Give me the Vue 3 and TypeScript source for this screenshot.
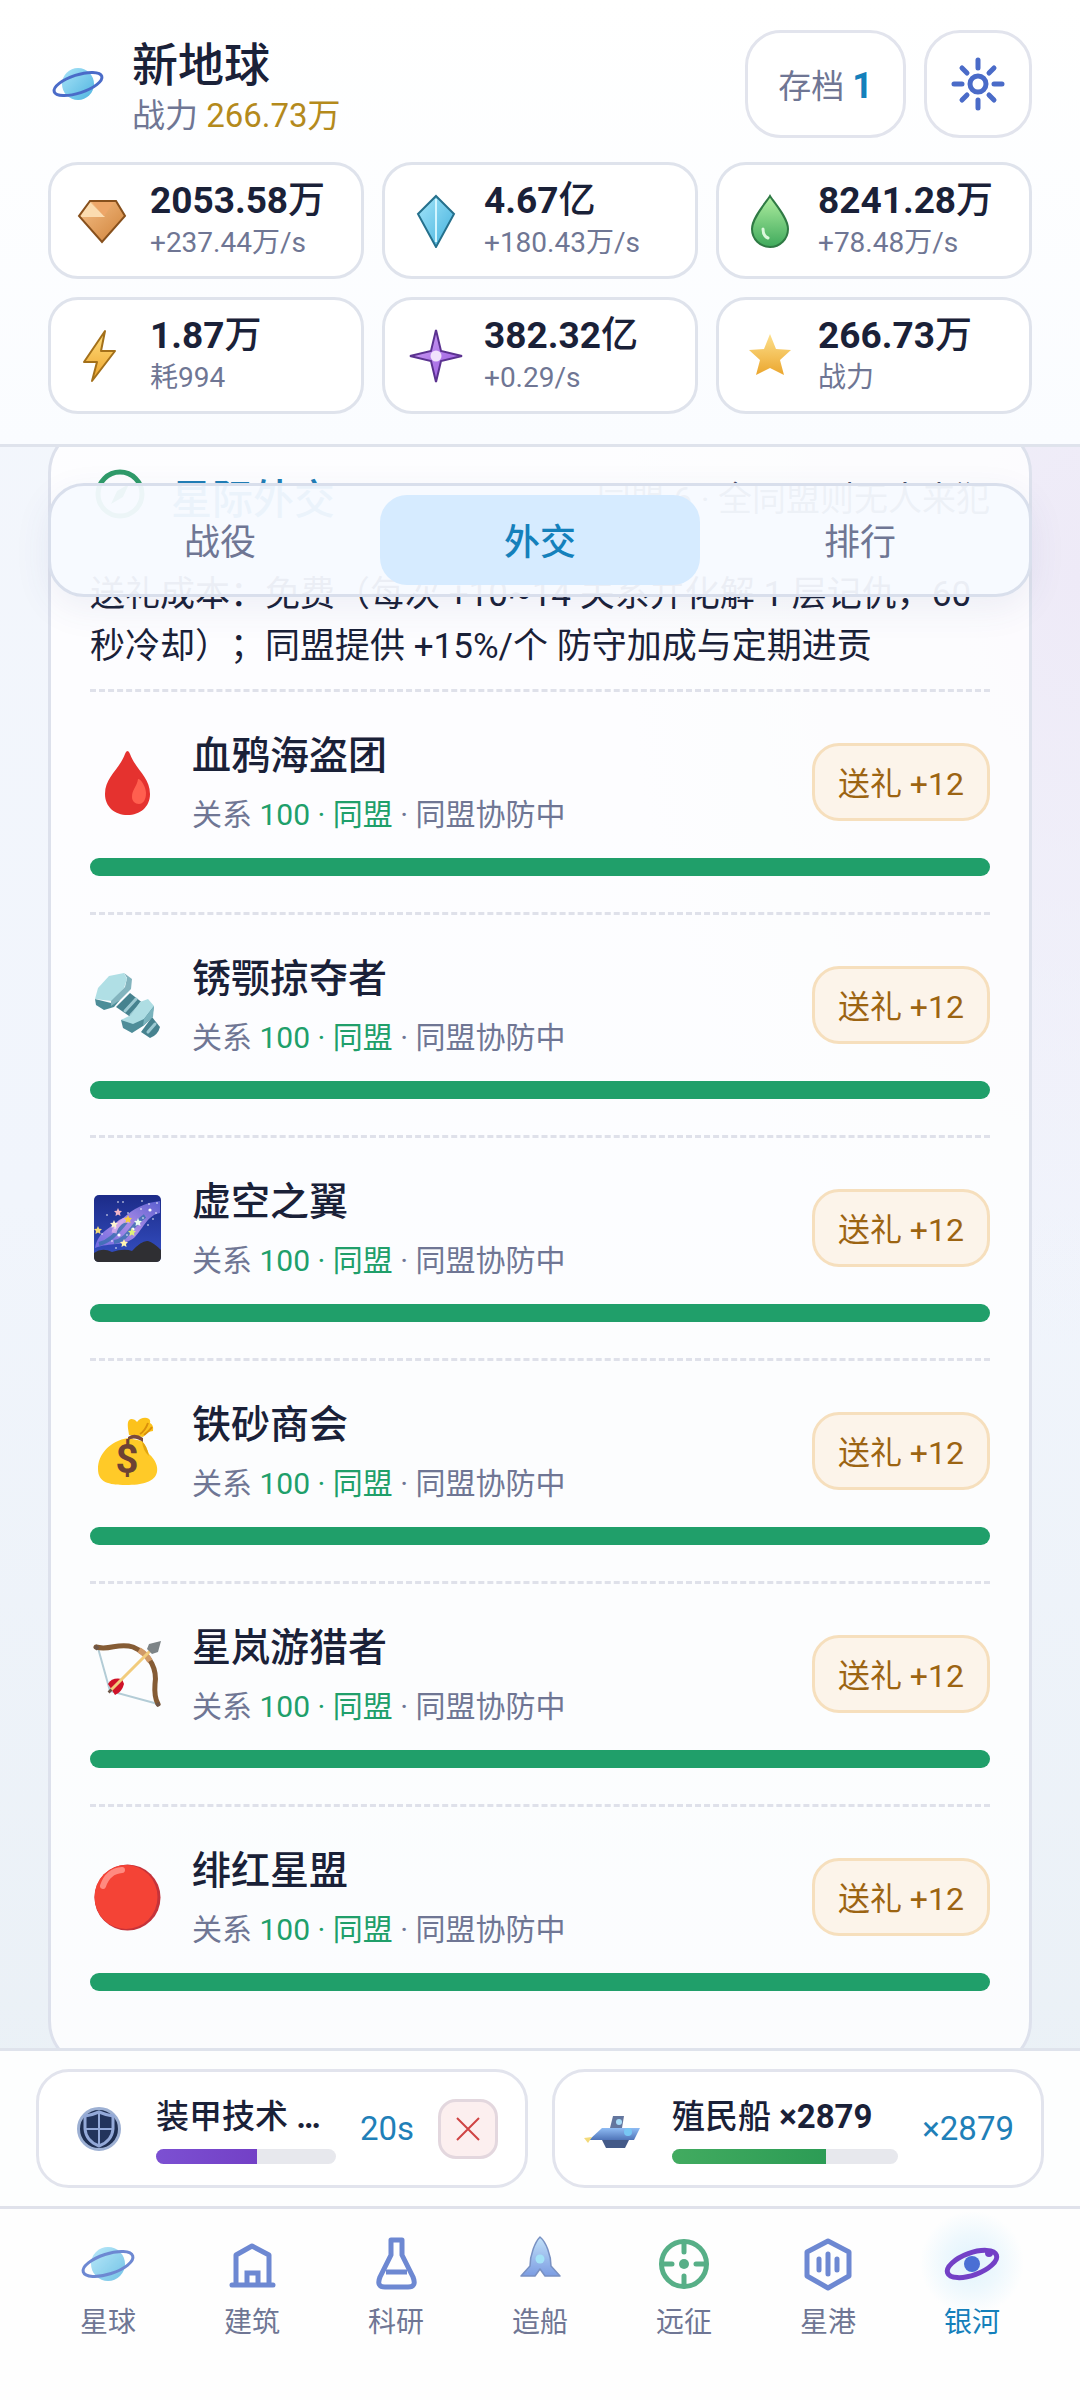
<script setup lang="ts">
import { ref } from 'vue'

interface Resource {
  id: string
  value: string
  unit: string
  rate: string
}

interface Faction {
  id: string
  name: string
  relation: number
}

interface QueueItem {
  id: string
  name: string
  count: string
  status: string
  percent: number
  cancelable: boolean
}

const resources: Resource[] = [
  { id: 'ore', value: '2053.58', unit: '万', rate: '+237.44万/s' },
  { id: 'crystal', value: '4.67', unit: '亿', rate: '+180.43万/s' },
  { id: 'gas', value: '8241.28', unit: '万', rate: '+78.48万/s' },
  { id: 'energy', value: '1.87', unit: '万', rate: '耗994' },
  { id: 'dark', value: '382.32', unit: '亿', rate: '+0.29/s' },
  { id: 'power', value: '266.73', unit: '万', rate: '战力' },
]

const tabs = ['战役', '外交', '排行']
const activeTab = ref('外交')

const factions: Faction[] = [
  { id: 'blood', name: '血鸦海盗团', relation: 100 },
  { id: 'bolt', name: '锈颚掠夺者', relation: 100 },
  { id: 'void', name: '虚空之翼', relation: 100 },
  { id: 'money', name: '铁砂商会', relation: 100 },
  { id: 'bow', name: '星岚游猎者', relation: 100 },
  { id: 'crimson', name: '绯红星盟', relation: 100 },
]

const queue: QueueItem[] = [
  { id: 'armor', name: '装甲技术', count: '…', status: '20s', percent: 56, cancelable: true },
  { id: 'colony', name: '殖民船', count: '×2879', status: '×2879', percent: 68, cancelable: false },
]

const navItems = [
  { id: 'planet', label: '星球' },
  { id: 'build', label: '建筑' },
  { id: 'research', label: '科研' },
  { id: 'ship', label: '造船' },
  { id: 'expedition', label: '远征' },
  { id: 'port', label: '星港' },
  { id: 'galaxy', label: '银河' },
]
const activeNav = ref('galaxy')

const skyDots: [number, number, number][] = [
  [28, 11, 1], [33, 11, 1], [52, 10, 1], [59, 13, 1], [60, 19, 2], [51, 18, 1], [17, 24, 1],
  [63, 28, 1], [58, 34, 1], [48, 32, 2], [43, 38, 2], [29, 44, 2], [25, 37, 1], [12, 43, 1],
  [22, 50, 1], [37, 44, 1], [67, 12, 1], [26, 57, 1], [53, 27, 1], [38, 22, 1], [66, 22, 1],
]
const skyStars: [number, number, string][] = [
  [28, 21, '#f3b6c8'], [38, 28, '#f8cf3c'], [8, 39, '#f5dc78'], [42, 41, '#dff07a'],
  [34, 52, '#fff3b0'], [24, 33, '#fdf2d0'], [48, 31, '#eafcf0'],
]
</script>

<template>
  <div class="app">
    <svg class="defs" width="0" height="0" aria-hidden="true">
      <defs>
        <linearGradient id="g-planet" x1="0" y1="0" x2="1" y2="1">
          <stop offset="0" stop-color="#a9e4f8" /><stop offset="1" stop-color="#4fb4e0" />
        </linearGradient>
        <linearGradient id="g-ore" x1="0" y1="0" x2="1" y2="1">
          <stop offset="0" stop-color="#f5c088" /><stop offset="1" stop-color="#cf8138" />
        </linearGradient>
        <linearGradient id="g-crystal" x1="0" y1="0" x2="1" y2="1">
          <stop offset="0" stop-color="#a4e6fa" /><stop offset="1" stop-color="#43b0dc" />
        </linearGradient>
        <linearGradient id="g-gas" x1="0" y1="0" x2="0" y2="1">
          <stop offset="0" stop-color="#b0eea0" /><stop offset="1" stop-color="#3faa5c" />
        </linearGradient>
        <linearGradient id="g-energy" x1="0" y1="0" x2="0" y2="1">
          <stop offset="0" stop-color="#ffdf80" /><stop offset="1" stop-color="#eda32a" />
        </linearGradient>
        <linearGradient id="g-dark" x1="0" y1="0" x2="1" y2="1">
          <stop offset="0" stop-color="#d3a9f7" /><stop offset="1" stop-color="#9350dc" />
        </linearGradient>
        <linearGradient id="g-star" x1="0" y1="0" x2="0" y2="1">
          <stop offset="0" stop-color="#fde08c" /><stop offset="1" stop-color="#eba62e" />
        </linearGradient>
        <linearGradient id="g-hull" x1="0" y1="0" x2="0" y2="1">
          <stop offset="0" stop-color="#8fbcf4" /><stop offset="1" stop-color="#4f74b8" />
        </linearGradient>
        <linearGradient id="g-rocket" x1="0" y1="0" x2="0" y2="1">
          <stop offset="0" stop-color="#b4dbf8" /><stop offset="1" stop-color="#5c85dc" />
        </linearGradient>
        <linearGradient id="g-sky" x1="0" y1="0" x2="0" y2="1">
          <stop offset="0" stop-color="#1c2b88" /><stop offset="1" stop-color="#3550c4" />
        </linearGradient>
        <linearGradient id="g-milky" x1="0" y1="1" x2="1" y2="0">
          <stop offset="0" stop-color="#6f6ae0" /><stop offset="0.5" stop-color="#a98be6" /><stop offset="1" stop-color="#5a5fd0" />
        </linearGradient>
      </defs>
    </svg>

    <header class="top">
      <div class="brand-row">
        <svg class="brand-icon" viewBox="0 0 60 60" aria-hidden="true">
          <circle cx="30" cy="30" r="16" fill="url(#g-planet)" />
          <ellipse cx="30" cy="30" rx="25" ry="9" transform="rotate(-18 30 30)" fill="none" stroke="#4a6bc8" stroke-width="3" />
        </svg>
        <div class="brand">
          <h1>新地球</h1>
          <p>战力 <span class="gold">266.73万</span></p>
        </div>
        <button class="save" type="button">存档 <b>1</b></button>
        <button class="settings" type="button" aria-label="设置">
          <svg viewBox="0 0 60 60" fill="none" stroke="#4a6bc8" stroke-width="5" stroke-linecap="round">
            <circle cx="30" cy="30" r="8" />
            <path d="M30 14V6M30 46v8M14 30H6M46 30h8M19 19l-5-5M41 19l5-5M19 41l-5 5M41 41l5 5" />
          </svg>
        </button>
      </div>

      <div class="resources">
        <div v-for="r in resources" :key="r.id" class="resource">
          <svg class="res-icon" viewBox="0 0 54 54" aria-hidden="true">
            <g v-if="r.id === 'ore'">
              <path d="M15 7H41L50 22L27 48L4 22Z" fill="url(#g-ore)" />
              <path d="M15 8L5 23H30Z" fill="#fbdcb0" />
              <path d="M17 8H39L29 22Z" fill="#eda668" />
              <path d="M15 7H41L50 22L27 48L4 22Z" fill="none" stroke="#87501c" stroke-width="2" />
            </g>
            <g v-else-if="r.id === 'crystal'">
              <path d="M27 2L45 20L27 53L9 20Z" fill="url(#g-crystal)" stroke="#25708c" stroke-width="2" />
              <path d="M27 5V48" stroke="#d2f5ff" stroke-width="2" />
            </g>
            <g v-else-if="r.id === 'gas'">
              <path d="M27 2C22 10 9 24 9 35A18 18 0 0 0 45 35C45 24 32 10 27 2Z" fill="url(#g-gas)" stroke="#2f7a44" stroke-width="2" />
              <path d="M20 35Q20 42 25 44" fill="none" stroke="#dcf8dd" stroke-width="3" stroke-linecap="round" />
            </g>
            <path v-else-if="r.id === 'energy'" d="M30 2L26 22H40L17 52L22 33H9Z" fill="url(#g-energy)" stroke="#a3701a" stroke-width="2" stroke-linejoin="round" />
            <g v-else-if="r.id === 'dark'">
              <path d="M27 1L32 22L53 27L32 32L27 53L22 32L1 27L22 22Z" fill="url(#g-dark)" stroke="#5b3290" stroke-width="2" />
              <circle cx="27" cy="27" r="5.5" fill="#f0e2fc" />
            </g>
            <path v-else d="M27 5L33 20L48 21L37 31L41 46L27 39L13 46L17 31L6 21L21 20Z" fill="url(#g-star)" />
          </svg>
          <div class="res-text">
            <strong>{{ r.value }}<span>{{ r.unit }}</span></strong>
            <small>{{ r.rate }}</small>
          </div>
        </div>
      </div>
    </header>

    <div class="stage">
      <nav class="tabs" aria-label="银河分区">
        <button
          v-for="t in tabs"
          :key="t"
          type="button"
          :class="{ active: t === activeTab }"
          @click="activeTab = t"
        >{{ t }}</button>
      </nav>

      <main class="scroll">
        <section class="panel">
          <div class="panel-head">
            <svg class="compass" viewBox="0 0 60 60" aria-hidden="true">
              <circle cx="30" cy="28" r="22" fill="none" stroke="#2f9b69" stroke-width="5" />
              <path d="M39 18L33 31L21 38L27 25Z" fill="#2f9b69" />
            </svg>
            <h2>星际外交</h2>
            <span class="hint">同盟 6 · 全同盟则无人来犯</span>
          </div>
          <p class="note">送礼成本：免费（每次 +10~14 关系并化解 1 层记仇，60 秒冷却）；同盟提供 +15%/个 防守加成与定期进贡</p>

          <article v-for="f in factions" :key="f.id" class="faction">
            <div class="faction-row">
              <svg class="emblem" viewBox="0 0 75 75" aria-hidden="true">
                <g v-if="f.id === 'blood'">
                  <path d="M37.5 6Q39 6 40 9C46 25 60 32 60 49C60 62 50 70 37.5 70S15 62 15 49C15 32 29 25 35 9Q36 6 37.5 6Z" fill="#e5322f" />
                  <path d="M48 34C51 34 56 42 56 48C56 55 53 59 49 59S42 56 42 52C42 44 47 42 48 34Z" fill="#ff5f4f" />
                </g>
                <g v-else-if="f.id === 'bolt'">
                  <path d="M26 39L40 25L54 36L42 50Z" fill="#46828f" />
                  <path d="M35 43L46 31M41 47L51 36" stroke="#9cc9d2" stroke-width="3" stroke-linecap="round" />
                  <path d="M51 64L62 49L70 59Q68 67 60 70Z" fill="#46828f" />
                  <path d="M58 64L65 56" stroke="#9cc9d2" stroke-width="3" stroke-linecap="round" />
                  <path d="M31 52L43 49L50 48L64 38L62 50L53 58L42 65L33 60Z" fill="#4f8d99" />
                  <path d="M31 52L41 47L50 34L58 31L64 38L54 51L43 56Z" fill="#aedde3" />
                  <path d="M64 38L54 51L53 58L63 49Z" fill="#7ab3bd" />
                  <path d="M5 31L21 35L30 32L24 39L14 42L6 37Z" fill="#4d8d98" />
                  <path d="M34 5L42 11L41 21L30 32L21 38V32L35 19L37 10Z" fill="#83b4be" />
                  <path d="M5 31L8 20L19 8L34 5L37 11L34 20L21 33Z" fill="#b0dfe5" />
                </g>
                <g v-else-if="f.id === 'void'">
                  <rect x="4" y="4" width="67" height="67" rx="5" fill="url(#g-sky)" />
                  <path d="M5 57C8 40 22 36 32 28C44 17 54 12 70 10V22C58 24 54 36 45 46C34 56 20 51 5 57Z" fill="url(#g-milky)" />
                  <path d="M9 53C21 50 28 40 36 31M24 51C37 50 40 35 55 25" fill="none" stroke="#2d6fa8" stroke-width="4" opacity="0.7" />
                  <path d="M24 42C26 32 34 27 40 30" fill="none" stroke="#dfb0ee" stroke-width="5" opacity="0.8" />
                  <circle v-for="(d, i) in skyDots" :key="'d' + i" :cx="d[0]" :cy="d[1]" :r="d[2] * 0.8" fill="#fff" />
                  <path
                    v-for="(s, i) in skyStars"
                    :key="'s' + i"
                    d="M0-4L1.2-1.3L4-1L2 1L2.5 4L0 2.5L-2.5 4L-2 1L-4-1L-1.2-1.3Z"
                    :transform="`translate(${s[0]} ${s[1]})`"
                    :fill="s[2]"
                  />
                  <path d="M4 62Q12 56 22 61Q34 57 42 60Q52 49 58 50Q64 52 71 59V66Q71 71 66 71H9Q4 71 4 66Z" fill="#2f2f33" />
                </g>
                <g v-else-if="f.id === 'money'">
                  <path d="M39 21C38 14 36 6 41 5Q45 5 47 8Q51 3 57 4Q61 5 60 9Q64 11 63 17Q58 17 53 23Z" fill="#fcc21b" />
                  <path d="M50 20Q55 17 58 9M54 21Q60 16 62 13" fill="none" stroke="#d98f0c" stroke-width="2" />
                  <path d="M38 24L52 27Q57 33 59 40C66 46 68 53 67 58C65 68 52 71 36 71C18 71 8 68 8 55C8 40 20 27 38 24Z" fill="#ffca28" />
                  <path d="M52 27Q57 32 59 42Q53 37 52 27Z" fill="#e2a610" />
                  <path d="M38 23Q45 18 53 24V28Q45 22 38 26Z" fill="#7a4a3c" />
                  <text x="37" y="59" text-anchor="middle" class="coin">$</text>
                </g>
                <g v-else-if="f.id === 'bow'" fill="none">
                  <path d="M8 11L20 54L68 67" stroke="#b3ccd6" stroke-width="2" />
                  <path d="M6 10C20 14 28 5 43 10C62 18 67 34 65 47Q64 60 68 67" stroke="#855c35" stroke-width="5" stroke-linecap="round" />
                  <path d="M49 13Q56 17 60 24" stroke="#d09a68" stroke-width="6" />
                  <path d="M18 47Q22 40 32 42L34 47Q32 55 25 58Z" fill="#cf1228" />
                  <path d="M21 53L60 14" stroke="#f2cc7c" stroke-width="3" />
                  <path d="M71 4L68 15L62 17L57 12L59 7Z" fill="#7d8487" />
                  <path d="M5 9L8 12M67 66L69 69M19 53L21 55" stroke="#6d5648" stroke-width="4" />
                </g>
                <g v-else>
                  <circle cx="37.5" cy="37.5" r="33" fill="#c5333a" />
                  <ellipse cx="36" cy="37" rx="31.5" ry="32" fill="#f44336" />
                  <path d="M13 26Q18 11 32 10" fill="none" stroke="#ff8a80" stroke-width="6" stroke-linecap="round" />
                </g>
              </svg>
              <div class="faction-text">
                <h3>{{ f.name }}</h3>
                <p>关系 <b>{{ f.relation }} · 同盟</b> · 同盟协防中</p>
              </div>
              <button class="gift" type="button">送礼 +12</button>
            </div>
            <div class="relation" role="progressbar" :aria-valuenow="f.relation" aria-label="关系">
              <div :style="{ width: f.relation + '%' }"></div>
            </div>
          </article>
        </section>
      </main>
    </div>

    <section class="queue">
      <div v-for="q in queue" :key="q.id" class="job">
        <svg class="job-icon" viewBox="0 0 66 66" aria-hidden="true">
          <g v-if="q.id === 'armor'">
            <circle cx="33" cy="33" r="20.5" fill="#1f2f52" stroke="#9db0d3" stroke-width="3" />
            <path d="M33 16Q40 19 47 20V33Q46 45 33 50Q20 45 19 33V20Q26 19 33 16Z" fill="#22345c" stroke="#93a9d8" stroke-width="3" />
            <path d="M33 17V50M19 33H47" stroke="#93a9d8" stroke-width="2" />
          </g>
          <g v-else>
            <path d="M31 20H42L40 32H28Z" fill="#63769e" />
            <path d="M20 44H47L43 52H24Z" fill="#445a88" />
            <path d="M7 44L20 32H58L52 44Z" fill="url(#g-hull)" />
            <circle cx="37" cy="26" r="3" fill="#a4dbf8" />
            <circle cx="46" cy="36" r="4" fill="#78c7f4" />
            <path d="M2 42L10 41L6 47Z" fill="#f3da7a" />
          </g>
        </svg>
        <div class="job-body">
          <div class="job-name">{{ q.name }} <b>{{ q.count }}</b></div>
          <div class="track" role="progressbar" :aria-valuenow="q.percent" :aria-label="q.name">
            <div :class="q.id" :style="{ width: q.percent + '%' }"></div>
          </div>
        </div>
        <span class="job-status">{{ q.status }}</span>
        <button v-if="q.cancelable" class="cancel" type="button" aria-label="取消">
          <svg viewBox="0 0 24 24"><path d="M1 1L23 23M23 1L1 23" stroke="#cf4444" stroke-width="2" /></svg>
        </button>
      </div>
    </section>

    <nav class="bottom" aria-label="主导航">
      <button
        v-for="n in navItems"
        :key="n.id"
        type="button"
        :class="{ active: n.id === activeNav }"
        @click="activeNav = n.id"
      >
        <svg viewBox="0 0 60 60" fill="none" stroke="#4a6bc8" stroke-width="5" stroke-linejoin="round" stroke-linecap="round" aria-hidden="true">
          <g v-if="n.id === 'planet'">
            <circle cx="30" cy="31" r="17" fill="url(#g-planet)" stroke="none" />
            <ellipse cx="30" cy="31" rx="26" ry="10" transform="rotate(-18 30 31)" stroke-width="3" />
          </g>
          <g v-else-if="n.id === 'build'">
            <path d="M14 51V22L30 13L47 22V51M10 52H51" />
            <path d="M25 51V40H36V51" stroke-linejoin="miter" />
          </g>
          <g v-else-if="n.id === 'research'">
            <path d="M25 7H36V22L47 44Q51 54 42 54H19Q10 54 14 44L25 22Z" />
            <path d="M20 39H41" stroke-linecap="butt" />
          </g>
          <g v-else-if="n.id === 'ship'" stroke="none">
            <path d="M30 4C25 9 20 22 20 33L11 43H25L30 36L35 43H50L41 33C41 22 36 9 30 4Z" fill="url(#g-rocket)" stroke="#5876b4" stroke-width="1.5" />
            <circle cx="30" cy="26" r="4.5" fill="#8ddcf6" />
          </g>
          <g v-else-if="n.id === 'expedition'" stroke="#2e9c6a">
            <circle cx="30" cy="31" r="22.5" />
            <path d="M30 9V19M30 43V53M8 31H18M42 31H52" />
            <circle cx="30" cy="31" r="5" fill="#2e9c6a" stroke="none" />
          </g>
          <g v-else-if="n.id === 'port'">
            <path d="M30 8L51 19V43L30 55L9 43V19Z" />
            <path d="M30 21V41M21 26V37M39 26V37" />
          </g>
          <g v-else>
            <ellipse cx="30" cy="31" rx="26" ry="11" transform="rotate(-20 30 31)" stroke="#7340c6" stroke-width="5" />
            <circle cx="30" cy="31" r="8" fill="#4a6fd4" stroke="none" />
            <circle cx="47" cy="20" r="4" fill="#7340c6" stroke="none" />
          </g>
        </svg>
        <span>{{ n.label }}</span>
      </button>
    </nav>
  </div>
</template>

<style>
body {
  margin: 0;
}
</style>

<style scoped>
* {
  box-sizing: border-box;
}

.app {
  display: flex;
  flex-direction: column;
  height: 100vh;
  font-family: Roboto, "Noto Sans CJK SC", sans-serif;
  color: #1a2138;
  background:
    radial-gradient(ellipse at 100% 24%, #eeeaf7 0, transparent 30%),
    linear-gradient(#f4f7fc, #f1f5fc 50%, #e8eff4);
}

.defs {
  position: absolute;
}

h1, h2, h3, p {
  margin: 0;
  font-weight: 400;
}

button {
  margin: 0;
  padding: 0;
  border: 0;
  background: none;
  font-family: inherit;
  color: inherit;
}

svg {
  display: block;
  flex: none;
}

/* Header */
.top {
  padding: 30px 48px;
  border-bottom: 3px solid #dfe3ec;
  background: linear-gradient(#ffffff, #fafcff);
}

.brand-row {
  display: flex;
  align-items: center;
  gap: 18px;
  margin-bottom: 24px;
}

.brand-icon {
  width: 60px;
  height: 60px;
}

.brand {
  flex: 1;
  padding: 3px 0 0 6px;
}

.brand h1 {
  font-size: 46px;
  line-height: 60px;
  font-weight: 500;
}

.brand p {
  font-size: 33px;
  line-height: 42px;
  color: #6f7694;
}

.gold {
  color: #b48a1c;
}

.save,
.settings {
  height: 108px;
  border: 3px solid #e2e4ed;
  border-radius: 36px;
  background: #fff;
}

.save {
  padding: 0 30px;
  font-size: 33px;
  color: #6f7694;
}

.save b {
  font-size: 36px;
  color: #1480bb;
}

.settings {
  display: grid;
  place-items: center;
  width: 108px;
}

.settings svg {
  width: 60px;
  height: 60px;
}

.resources {
  display: grid;
  grid-template-columns: repeat(3, 1fr);
  gap: 18px;
}

.resource {
  display: flex;
  align-items: center;
  gap: 21px;
  height: 117px;
  padding: 0 24px;
  border: 3px solid #dfe3ec;
  border-radius: 30px;
  background: #fff;
}

.res-icon {
  width: 54px;
  height: 54px;
}

.res-text {
  padding-bottom: 3px;
  white-space: nowrap;
}

.res-text strong {
  display: block;
  font-size: 37px;
  line-height: 48px;
  font-weight: 700;
}

.res-text strong span {
  font-weight: 500;
}

.res-text small {
  display: block;
  font-size: 28px;
  line-height: 36px;
  color: #6f7694;
}

/* Content */
.stage {
  position: relative;
  flex: 1;
  min-height: 0;
}

.tabs {
  position: absolute;
  z-index: 1;
  top: 36px;
  left: 48px;
  right: 48px;
  display: flex;
  padding: 9px;
  border: 3px solid #d9dfec;
  border-radius: 36px;
  background: rgba(247, 250, 255, 0.95);
  box-shadow: 0 12px 36px rgba(60, 80, 140, 0.08);
}

.tabs button {
  flex: 1;
  height: 90px;
  padding-bottom: 2px;
  border-radius: 27px;
  font-size: 36px;
  color: #6f7694;
}

.tabs .active {
  background: #d6ebff;
  font-weight: 500;
  color: #1480bb;
}

.scroll {
  height: 100%;
  padding: 0 48px;
  overflow: hidden;
}

.panel {
  margin-top: -22px;
  padding: 39px;
  border: 3px solid #dde1ec;
  border-radius: 48px;
  background: rgba(255, 255, 255, 0.8);
}

.panel-head {
  display: flex;
  align-items: center;
  height: 58px;
  margin-bottom: 44px;
}

.compass {
  width: 60px;
  height: 60px;
}

.panel-head h2 {
  flex: 1;
  padding-left: 21px;
  font-size: 41px;
  font-weight: 500;
  color: #1f7db5;
}

.hint {
  font-size: 34px;
  color: #454c68;
}

.note {
  margin-bottom: 16px;
  font-size: 35px;
  line-height: 52px;
  text-spacing-trim: space-all;
}

.faction {
  padding: 34px 0 36px;
  border-top: 3px dashed #dfe1ea;
}

.faction-row {
  display: flex;
  align-items: center;
  margin-bottom: 20px;
}

.emblem {
  width: 75px;
  height: 75px;
}

.coin {
  font-size: 40px;
  font-weight: 700;
  fill: #6d4234;
}

.faction-text {
  flex: 1;
  padding-left: 27px;
}

.faction-text h3 {
  margin-bottom: 6px;
  font-size: 39px;
  line-height: 60px;
  font-weight: 500;
}

.faction-text p {
  font-size: 30px;
  line-height: 46px;
  color: #6f7694;
}

.faction-text b {
  font-weight: 400;
  color: #209f6a;
}

.gift {
  height: 78px;
  padding: 0 23px 2px;
  border: 3px solid #f6dfbd;
  border-radius: 27px;
  background: #fcf4ea;
  font-size: 32px;
  color: #9c6412;
}

.relation {
  height: 18px;
  border-radius: 9px;
  overflow: hidden;
  background: #e7e8ee;
}

.relation div {
  height: 100%;
  background: #209f6a;
}

/* Work queue */
.queue {
  display: flex;
  gap: 24px;
  padding: 18px 36px;
  border-top: 3px solid #dfe3ec;
  background: #fdfefe;
}

.job {
  display: flex;
  flex: 1;
  align-items: center;
  gap: 24px;
  min-width: 0;
  padding: 21px 27px;
  border: 3px solid #e2e4ed;
  border-radius: 33px;
  background: #fff;
}

.job-icon {
  width: 66px;
  height: 66px;
}

.job-body {
  flex: 1;
  min-width: 0;
}

.job-name {
  margin-bottom: 8px;
  font-size: 33px;
  line-height: 48px;
  font-weight: 500;
  white-space: nowrap;
}

.job-name b {
  font-weight: 700;
}

.track {
  height: 15px;
  border-radius: 8px;
  overflow: hidden;
  background: #e7e8ed;
}

.track div {
  height: 100%;
}

.track .armor {
  background: linear-gradient(90deg, #7c50d2, #7340c6);
}

.track .colony {
  background: linear-gradient(90deg, #42ab60, #2c9c55);
}

.job-status {
  font-size: 33px;
  color: #1f80b8;
}

.cancel {
  display: grid;
  place-items: center;
  width: 60px;
  height: 60px;
  border: 3px solid #e3d7de;
  border-radius: 18px;
  background: #fcefef;
}

.cancel svg {
  width: 24px;
  height: 24px;
}

/* Bottom navigation */
.bottom {
  display: flex;
  padding: 0 36px;
  border-top: 3px solid #e0e2eb;
  background: #fefefe;
}

.bottom button {
  display: flex;
  flex: 1;
  flex-direction: column;
  align-items: center;
  gap: 12px;
  padding: 24px 0 59px;
  font-size: 28px;
  line-height: 36px;
  color: #6f7694;
}

.bottom svg {
  width: 60px;
  height: 60px;
  opacity: 0.8;
}

.bottom .active {
  color: #1480bb;
  background: radial-gradient(circle at 50% 54px, #e0f3fc 0, #eef8fd 28px, #fefefe 52px);
}

.bottom .active svg {
  opacity: 1;
}
</style>
